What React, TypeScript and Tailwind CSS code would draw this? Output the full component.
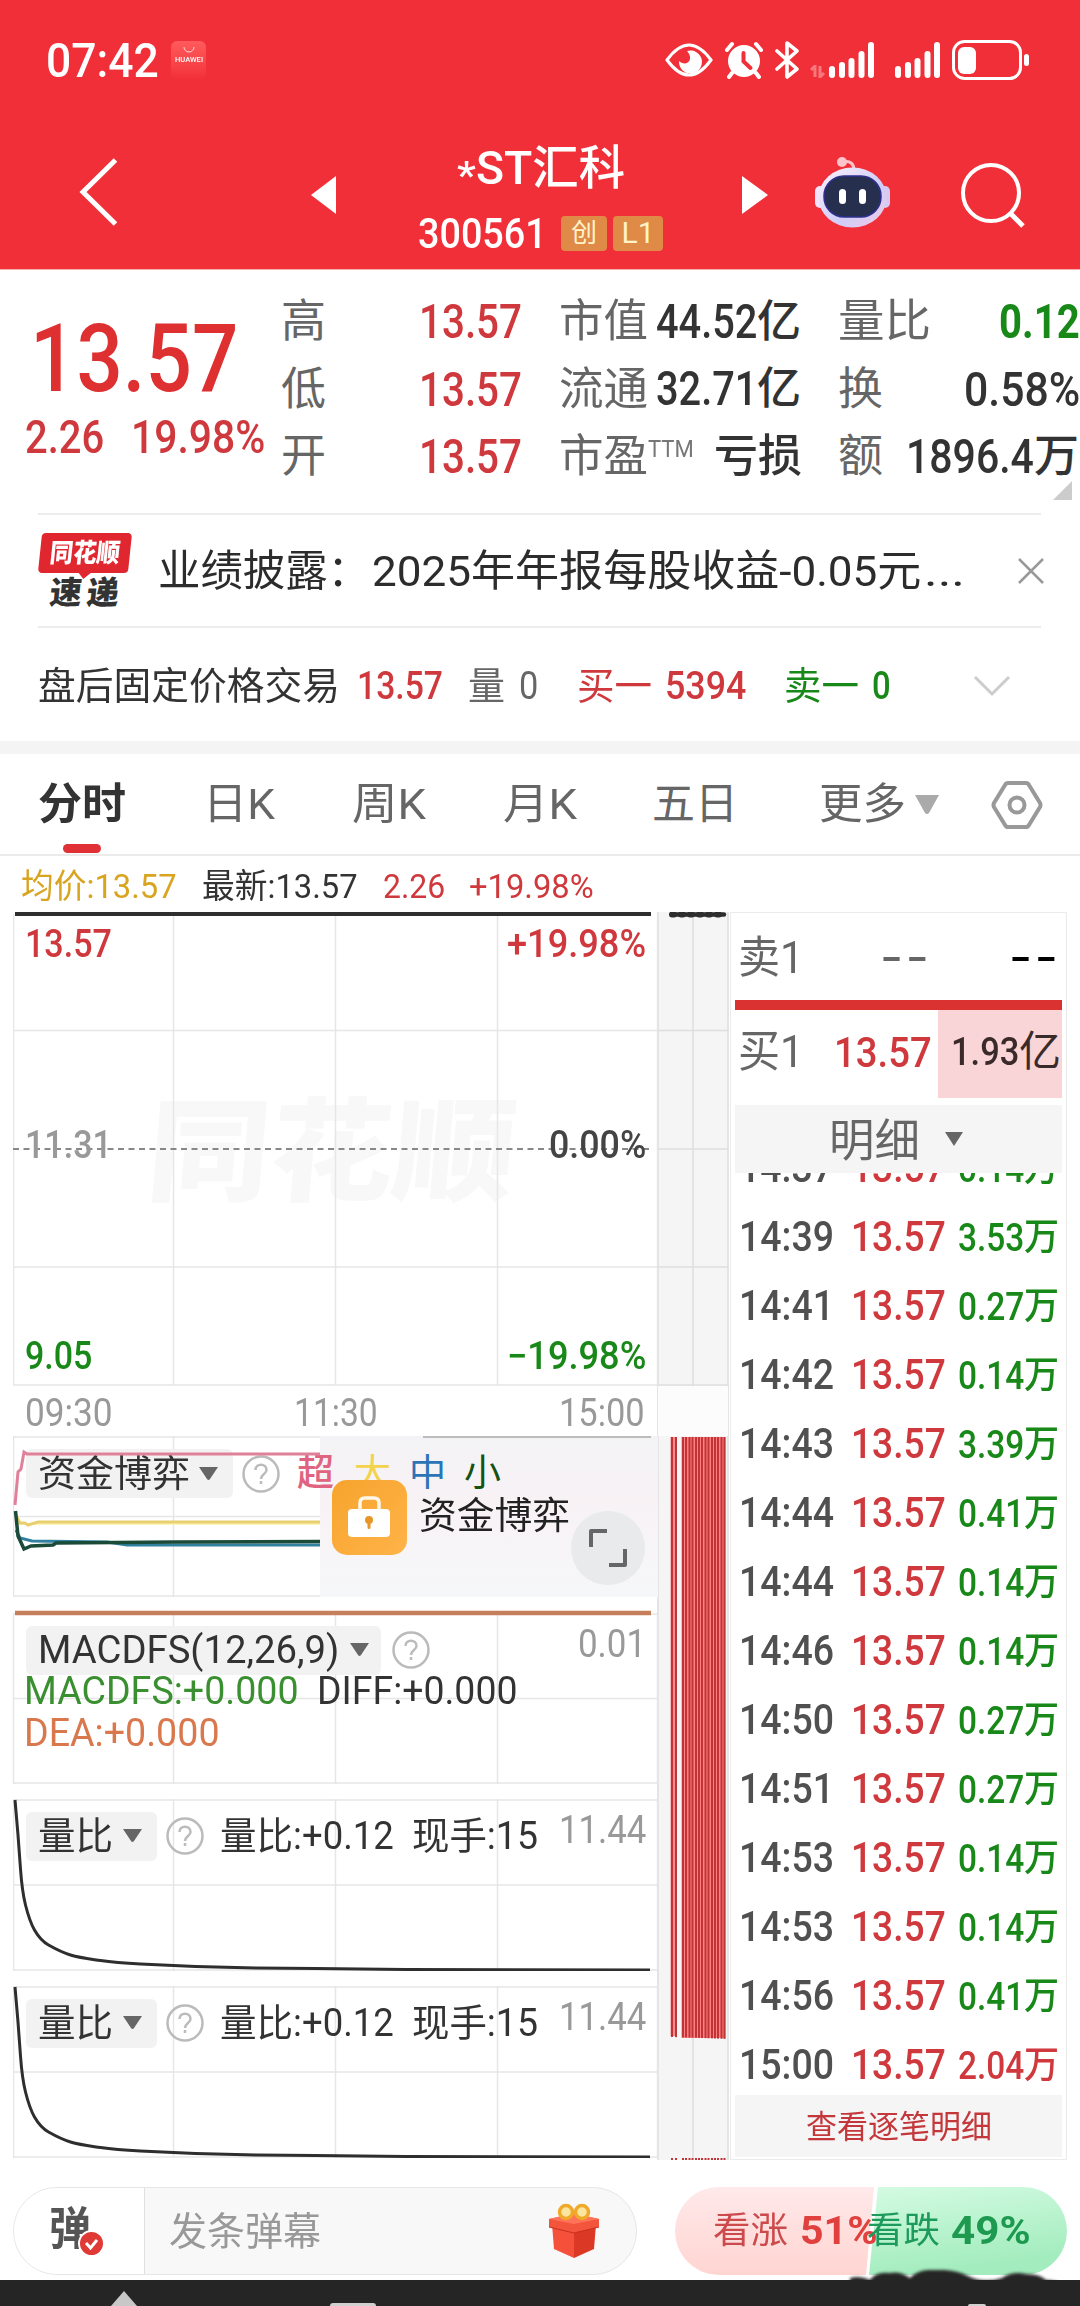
import React, { useLayoutEffect, useRef } from "react";

// Condensed text: squeezes its content into the width given by className
const Fit = ({
  className = "",
  children,
}: {
  className?: string;
  children: React.ReactNode;
}) => {
  const outer = useRef<HTMLSpanElement>(null);
  const inner = useRef<HTMLSpanElement>(null);
  useLayoutEffect(() => {
    if (!outer.current || !inner.current) return;
    const ratio = outer.current.clientWidth / inner.current.offsetWidth;
    inner.current.style.transform = `scaleX(${ratio})`;
  }, []);
  return (
    <span ref={outer} className={`block shrink-0 leading-none ${className}`}>
      <span ref={inner} className="inline-block origin-left whitespace-nowrap align-top">
        {children}
      </span>
    </span>
  );
};

const Signal = () => (
  <svg width="46" height="36" viewBox="0 0 46 36" fill="#fff">
    <rect x="0" y="24" width="6" height="12" rx="3" />
    <rect x="10" y="20" width="6" height="16" rx="3" />
    <rect x="19.5" y="16" width="6" height="20" rx="3" />
    <rect x="29.5" y="9" width="6" height="27" rx="3" />
    <rect x="39" y="0" width="6" height="36" rx="3" />
  </svg>
);

const StatusBar = () => (
  <div className="flex h-[120px] items-center pl-[46px] text-white">
    <Fit className="mt-0.5 w-[113px] text-[48px] font-medium">07:42</Fit>
    <div className="ml-3 flex h-[38px] w-[35px] flex-col items-center rounded-md bg-gradient-to-b from-[#ff5a5c] to-[#f23038]">
      <svg width="12" height="8" viewBox="0 0 12 8" className="mt-[5px]" fill="none" stroke="#ffd9d9" strokeWidth="1">
        <path d="M1 1a5 5 0 0 0 10 0" />
      </svg>
      <Fit className="mt-[3px] w-[28px] text-[7px] font-medium">HUAWEI</Fit>
    </div>
    <svg className="ml-[459px]" width="48" height="36" viewBox="0 0 48 36">
      <path d="M2 18C10 7 17 3 24 3s14 4 22 15C38 29 31 33 24 33S10 29 2 18Z" fill="none" stroke="#fff" strokeWidth="3" />
      <path d="M22 9a11.500 11.500 0 1 1-8 10c4 4 10 3 11-2 .5-3-1-6-3-8Z" fill="#fff" />
    </svg>
    <svg className="ml-3" width="38" height="38" viewBox="0 0 38 38">
      <circle cx="19" cy="20" r="16" fill="#fff" />
      <path d="M18.500 12v8.500l7 6.500" fill="none" stroke="#f12f38" strokeWidth="4" strokeLinecap="round" />
      <path d="M2 9l5-6M36 9l-5-6M7 32l-3 4M31 32l3 4" stroke="#fff" strokeWidth="4" strokeLinecap="round" />
    </svg>
    <svg className="ml-[11px]" width="26" height="38" viewBox="0 0 26 38" fill="none" stroke="#fff" strokeWidth="3.600" strokeLinejoin="round" strokeLinecap="round">
      <path d="M3 10l20 18-10 8V2l10 8L3 28" />
    </svg>
    <svg className="ml-2.5 mt-[22px]" width="15" height="13" viewBox="0 0 15 13" fill="none" stroke="#f8797c" strokeWidth="3">
      <path d="M1 5l4-4v11M14 8l-4 4V1" />
    </svg>
    <div className="ml-1">
      <Signal />
    </div>
    <div className="ml-[20px]">
      <Signal />
    </div>
    <svg className="ml-[11px]" width="78" height="40" viewBox="0 0 78 40">
      <rect x="1.500" y="1.500" width="67" height="37" rx="11" fill="none" stroke="#fff" strokeWidth="3" />
      <rect x="6" y="7" width="18" height="27" rx="6" fill="#fff" />
      <rect x="72" y="14" width="5" height="12" rx="2.500" fill="#fff" />
    </svg>
  </div>
);

const Robot = () => (
  <svg width="76" height="72" viewBox="0 0 76 72">
    <defs>
      <linearGradient id="head" x1="0" y1="0" x2="1" y2="1">
        <stop offset="0" stopColor="#fdf3fb" />
        <stop offset="0.6" stopColor="#cfcdf8" />
        <stop offset="1" stopColor="#f3c9e4" />
      </linearGradient>
    </defs>
    <circle cx="27" cy="6" r="5" fill="#ffc4cb" />
    <path d="M28 6c7-2 11 2 11 8" fill="none" stroke="#ffc4cb" strokeWidth="3" />
    <rect x="0" y="30" width="10" height="22" rx="5" fill="#f4e4fa" />
    <rect x="65" y="30" width="10" height="22" rx="5" fill="#d8c8f4" />
    <ellipse cx="37.500" cy="41.500" rx="34" ry="30" fill="url(#head)" />
    <rect x="9" y="20" width="57" height="41" rx="20" fill="#26304e" stroke="#2f2f90" strokeWidth="1.500" />
    <rect x="24" y="33" width="7" height="15" rx="3.500" fill="#fff" />
    <rect x="44" y="33" width="7" height="15" rx="3.500" fill="#fff" />
  </svg>
);

const TitleBar = () => (
  <div className="flex h-[149px] text-white">
    <svg className="ml-[79px] mt-[38px]" width="40" height="68" viewBox="0 0 40 68" fill="none" stroke="#fff" strokeWidth="5">
      <path d="M36.500 2L4 34l32.500 32" />
    </svg>
    <svg className="ml-[192px] mt-[56px]" width="26" height="38" viewBox="0 0 26 38" fill="#fff">
      <path d="M0 19L25 0v38z" />
    </svg>
    <div className="ml-[81px] mt-[24px] flex w-[246px] flex-col">
      <div className="flex h-[48px] pl-[39px] font-medium">
        <Fit className="mt-[13px] w-[19px] text-[38px]">*</Fit>
        <Fit className="w-[149px] text-[47px]">ST汇科</Fit>
      </div>
      <div className="mt-[23px] flex h-[36px] items-center">
        <Fit className="w-[129px] text-[43px] font-medium">300561</Fit>
        <span className="ml-[14px] flex h-[35px] w-[46px] items-center justify-center rounded bg-[#e08a48]">
          <span className="text-[26px] leading-none text-[#fff3c8]">创</span>
        </span>
        <span className="ml-1.5 flex h-[35px] w-[50px] items-center justify-center rounded bg-[#e08a48]">
          <span className="text-[30px] leading-none text-[#fff3c8]">L1</span>
        </span>
      </div>
    </div>
    <svg className="ml-[78px] mt-[56px]" width="26" height="38" viewBox="0 0 26 38" fill="#fff">
      <path d="M26 19L0 0v38z" />
    </svg>
    <div className="ml-[47px] mt-[36px]">
      <Robot />
    </div>
    <svg className="ml-[70px] mt-[42px]" width="64" height="66" viewBox="0 0 64 66" fill="none" stroke="#fff" strokeWidth="4">
      <circle cx="30" cy="31" r="28" />
      <path d="M49 51l13 13" strokeWidth="5" />
    </svg>
  </div>
);

const Quote = () => (
  <div className="flex h-[243px] text-[#333]">
    <div className="w-[281px] pt-[41px] text-[#df3031]">
      <Fit className="ml-[30px] w-[208px] text-[95px] font-medium">13.57</Fit>
      <div className="mt-[8px] flex pl-[25px] text-[46px] font-medium text-[#cf383c]">
        <Fit className="w-[79px]">2.26</Fit>
        <Fit className="ml-[27px] w-[134px]">19.98%</Fit>
      </div>
    </div>
    <div className="flex w-[241px] flex-col pt-[18px]">
      {["高", "低", "开"].map((label) => (
        <div key={label} className="flex h-[67.500px] items-center justify-between">
          <span className="text-[45px] leading-none text-[#666]">{label}</span>
          <Fit className="w-[103px] text-[49px] font-medium text-[#cf383c]">13.57</Fit>
        </div>
      ))}
    </div>
    <div className="ml-[37px] flex w-[243px] flex-col pt-[18px]">
      <div className="flex h-[67.500px] items-center">
        <Fit className="w-[89px] text-[45px] text-[#666]">市值</Fit>
        <Fit className="ml-[8px] w-[101px] text-[48px] font-medium">44.52</Fit>
        <span className="text-[44px] leading-none font-medium">亿</span>
      </div>
      <div className="flex h-[67.500px] items-center">
        <Fit className="w-[89px] text-[45px] text-[#666]">流通</Fit>
        <Fit className="ml-[8px] w-[101px] text-[48px] font-medium">32.71</Fit>
        <span className="text-[44px] leading-none font-medium">亿</span>
      </div>
      <div className="flex h-[67.500px] items-center">
        <Fit className="w-[89px] text-[45px] text-[#666]">市盈</Fit>
        <Fit className="mb-4 w-[46px] text-[24px] text-[#777]">TTM</Fit>
        <Fit className="ml-[20px] w-[88px] text-[45px] font-medium">亏损</Fit>
      </div>
    </div>
    <div className="ml-[36px] flex w-[242px] flex-col pt-[18px]">
      <div className="flex h-[67.500px] items-center justify-between">
        <Fit className="w-[93px] text-[45px] text-[#666]">量比</Fit>
        <Fit className="w-[81px] text-[49px] font-bold text-[#188818]">0.12</Fit>
      </div>
      <div className="flex h-[67.500px] items-center justify-between">
        <span className="text-[45px] leading-none text-[#666]">换</span>
        <Fit className="w-[116px] text-[49px] font-medium">0.58%</Fit>
      </div>
      <div className="flex h-[67.500px] items-center">
        <span className="text-[45px] leading-none text-[#666]">额</span>
        <Fit className="ml-[23px] w-[128px] text-[49px] font-medium">1896.4</Fit>
        <span className="text-[45px] leading-none font-medium">万</span>
      </div>
      <svg className="-mt-2.5 mr-[7px] self-end" width="20" height="20" viewBox="0 0 20 20" fill="#ccc">
        <path d="M0 19L19 0v19z" />
      </svg>
    </div>
  </div>
);

const News = () => (
  <div className="mx-[38px] flex h-[115px] w-[1003px] items-center border-y-2 border-[#ececec]">
    <div className="flex w-[94px] shrink-0 flex-col items-center">
      <div className="relative flex h-[40px] w-[90px] -skew-x-6 items-center justify-center rounded bg-[#e0262f]">
        <Fit className="w-[70px] text-[26px] font-black text-white">同花顺</Fit>
        <svg className="absolute -bottom-[6px] left-[40px]" width="14" height="7" viewBox="0 0 14 7" fill="#e0262f">
          <path d="M0 0h14L6 7z" />
        </svg>
      </div>
      <div className="mt-1 flex -skew-x-6 gap-[5px] text-[32px] leading-none font-black text-[#333]">
        <span>速</span>
        <span>递</span>
      </div>
    </div>
    <Fit className="mt-0.5 ml-[26px] w-[212px] text-[43px] text-[#2c2c2c]">业绩披露：</Fit>
    <Fit className="mt-0.5 ml-[2px] w-[549px] text-[43px] text-[#2c2c2c]">2025年年报每股收益-0.05元</Fit>
    <Fit className="mt-0.5 ml-[3px] w-[41px] text-[43px] text-[#2c2c2c]">...</Fit>
    <svg className="ml-[53px] shrink-0" width="26" height="26" viewBox="0 0 26 26" stroke="#999" strokeWidth="2.500">
      <path d="M1 1l24 24M25 1L1 25" />
    </svg>
  </div>
);

const AfterHours = () => (
  <div className="flex h-[113px] items-center pt-0.5 pl-[38px] text-[38px] text-[#333]">
    <Fit className="w-[302px]">盘后固定价格交易</Fit>
    <Fit className="ml-[17px] w-[86px] font-medium text-[#cf383c]">13.57</Fit>
    <Fit className="ml-[25px] w-[37px] text-[#666]">量</Fit>
    <Fit className="ml-[14px] w-[19px] text-[#666]">0</Fit>
    <Fit className="ml-[39px] w-[75px] text-[#cf383c]">买一</Fit>
    <Fit className="ml-[13px] w-[81px] font-medium text-[#cf383c]">5394</Fit>
    <Fit className="ml-[38px] w-[75px] text-[#188818]">卖一</Fit>
    <Fit className="ml-[13px] w-[19px] font-medium text-[#188818]">0</Fit>
    <svg className="ml-[82px]" width="38" height="22" viewBox="0 0 38 22" fill="none" stroke="#ccc" strokeWidth="3">
      <path d="M2 2l17 17L36 2" />
    </svg>
  </div>
);

const Tabs = () => (
  <div className="border-b-2 border-[#ebebeb]">
    <div className="flex h-[100px] items-center pt-px text-[43px] text-[#666]">
      <div className="relative ml-[38px]">
        <Fit className="w-[88px] font-bold text-[#333]">分时</Fit>
        <span className="absolute top-[61px] left-[25px] h-[9px] w-[38px] rounded-full bg-[#e03236]" />
      </div>
      <Fit className="ml-[77px] w-[72px]">日K</Fit>
      <Fit className="ml-[77px] w-[74px]">周K</Fit>
      <Fit className="ml-[77px] w-[74px]">月K</Fit>
      <Fit className="ml-[75px] w-[86px]">五日</Fit>
      <Fit className="ml-[81px] w-[87px]">更多</Fit>
      <svg className="ml-[9px]" width="24" height="20" viewBox="0 0 24 20" fill="#aaa">
        <path d="M0 0h24L14 18q-2 2-4 0z" />
      </svg>
      <svg className="ml-[52px]" width="52" height="50" viewBox="0 0 52 50" fill="none" stroke="#999" strokeWidth="4">
        <path d="M17 3h18q2 0 3 2l11 18q1 2 0 4L38 45q-1 2-3 2H17q-2 0-3-2L3 27q-1-2 0-4L14 5q1-2 3-2Z" />
        <circle cx="26" cy="25" r="7.500" />
      </svg>
    </div>
  </div>
);

const grid = "#e6e6e6";

const MainChart = () => (
  <div className="relative h-[474px] w-[645px]">
    <svg className="absolute inset-0" width="645" height="474" viewBox="0 0 645 474">
      <text x="136" y="280" transform="skewX(-5) translate(20 0)" fontSize="112" fontWeight="900" fill="#f8f8f8" textLength="368" lengthAdjust="spacingAndGlyphs">
        同花顺
      </text>
      <path d="M.5 2v471M160.500 2v471M322.500 2v471M484.500 2v471M644.500 2v471M0 118.500h645M0 355h645M0 473h645" stroke={grid} strokeWidth="1.500" fill="none" />
      <path d="M0 237h640" stroke="#888" strokeWidth="2" strokeDasharray="6 4.500" />
      <path d="M2 2h636" stroke="#2e2e2e" strokeWidth="4" />
    </svg>
    <div className="absolute inset-0 flex flex-col pl-[12px] text-[38px] font-medium">
      <div className="mt-[13px] flex justify-between pr-[12px] text-[#cf383c]">
        <Fit className="w-[87px]">13.57</Fit>
        <Fit className="w-[139px]">+19.98%</Fit>
      </div>
      <div className="mt-[163px] flex justify-between pr-[12px] text-[#999]">
        <Fit className="w-[87px]">11.31</Fit>
        <Fit className="w-[97px] text-[#444]">0.00%</Fit>
      </div>
      <div className="mt-[173px] flex justify-between pr-[12px] text-[#188818]">
        <Fit className="w-[67px]">9.05</Fit>
        <Fit className="w-[139px]">−19.98%</Fit>
      </div>
    </div>
  </div>
);

const Help = () => (
  <svg width="38" height="38" viewBox="0 0 38 38" fill="none" stroke="#bbb" strokeWidth="2.500">
    <circle cx="19" cy="19" r="17.500" />
    <path d="M13.500 15c0-7 11-7 11 0 0 4-5.500 4-5.500 9M19 26v3" stroke="#bbb" />
  </svg>
);

const Caret = () => (
  <svg width="19" height="14" viewBox="0 0 19 14" fill="#666">
    <path d="M0 0h19L11 12q-1.500 2-3 0z" />
  </svg>
);

const Grid = ({ h }: { h: number }) => (
  <path
    d={`M.5 0V${h}M160.500 0V${h}M322.500 0V${h}M484.500 0V${h}M644.500 0V${h}M0 1h645M0 ${h / 2}h645M0 ${h - 1}h645`}
    stroke={grid}
    strokeWidth="1.500"
    fill="none"
  />
);

const FundPanel = () => (
  <div className="relative h-[161px] w-[645px]">
    <svg className="absolute inset-0" width="645" height="161" viewBox="0 0 645 161" fill="none">
      <Grid h={161} />
      <path d="M3 88h304" stroke="#fdf5b8" strokeWidth="2" />
      <path d="M3 79l4 8 5 0 3 2 10-3h283" stroke="#e8d070" strokeWidth="3" />
      <path d="M3 94l4 8 12 3 75 1 20 3h193" stroke="#3080a0" strokeWidth="3" />
      <path d="M2.500 75L5 100l6 13 7-3 22-1 3-2 120-1 144-.5" stroke="#1a4a38" strokeWidth="3.500" />
    </svg>
    <div className="absolute top-0 right-0 h-[161px] w-[338px] bg-gradient-to-b from-[#f3f3f5] via-[#f8f2f5] via-40% to-[#f6f7f9]" />
    <div className="relative flex items-center pt-[13px] pl-[13px] text-[37px] leading-none">
      <div className="flex h-[49px] w-[207px] items-center rounded-md bg-[#f2f2f2] pl-[12px] text-[#333]">
        <Fit className="mt-0.5 w-[152px]">资金博弈</Fit>
        <div className="ml-[9px]">
          <Caret />
        </div>
      </div>
      <div className="ml-[9px]">
        <Help />
      </div>
      <span className="ml-[17px] font-medium text-[#de6480]">超</span>
      <span className="ml-[20px] text-[#f3d24c]">大</span>
      <span className="ml-[18px] text-[#2b74b5]">中</span>
      <span className="ml-[18px] text-[#145214]">小</span>
    </div>
    <svg className="absolute inset-0" width="645" height="161" viewBox="0 0 645 161" fill="none">
      <path d="M410 1h228" stroke="#aaa" strokeWidth="1.500" />
      <path d="M2 69L5 36l3-3 3-17 3 2h293" stroke="#e0809a" strokeWidth="3" />
    </svg>
    <div className="absolute top-[44px] left-[319px] flex items-center">
      <svg width="75" height="75" viewBox="0 0 75 75">
        <defs>
          <linearGradient id="lock" x1="0" y1="0" x2="1" y2="1">
            <stop offset="0" stopColor="#f6a42e" />
            <stop offset="1" stopColor="#ffb347" />
          </linearGradient>
        </defs>
        <rect width="75" height="75" rx="15" fill="url(#lock)" />
        <path d="M28 31v-8q0-5 5-5h9q5 0 5 5v8" fill="none" stroke="#fff8e8" strokeWidth="3.500" />
        <rect x="16" y="29" width="42" height="28" rx="4" fill="#fff" />
        <circle cx="37" cy="40" r="4" fill="#e8962a" />
        <rect x="35.500" y="41" width="3" height="8" rx="1.500" fill="#e8962a" />
      </svg>
      <Fit className="mb-0.5 ml-[12px] w-[151px] text-[37px] text-[#222]">资金博弈</Fit>
    </div>
    <div className="absolute top-[75px] left-[558px] flex size-[74px] items-center justify-center rounded-full bg-[#e9eaec]">
      <svg width="40" height="40" viewBox="0 0 40 40" fill="none" stroke="#666" strokeWidth="4" strokeLinejoin="round">
        <path d="M19 3H3v16M21 37h16V21" />
      </svg>
    </div>
  </div>
);

const MacdPanel = () => (
  <div className="relative mt-[16px] h-[171px] w-[645px]">
    <svg className="absolute inset-0 overflow-visible" width="645" height="171" viewBox="0 0 645 171" fill="none">
      <Grid h={171} />
      <path d="M2 0h636" stroke="#c67f5c" strokeWidth="4.500" />
    </svg>
    <div className="relative flex items-center pt-[12px] pl-[13px] text-[38px]">
      <div className="flex h-[49px] w-[355px] items-center rounded-md bg-[#f2f2f2] pl-[12px] text-[#333]">
        <Fit className="w-[301px]">MACDFS(12,26,9)</Fit>
        <div className="ml-[11px]">
          <Caret />
        </div>
      </div>
      <div className="ml-[11px]">
        <Help />
      </div>
      <Fit className="mb-3 ml-[148px] w-[68px] text-[#999]">0.01</Fit>
    </div>
    <div className="relative mt-[-3px] flex pl-[11px] text-[38px] text-[#333]">
      <Fit className="w-[275px] text-[#3a8f30]">MACDFS:+0.000</Fit>
      <Fit className="ml-[18px] w-[201px]">DIFF:+0.000</Fit>
    </div>
    <Fit className="relative mt-[4px] ml-[11px] w-[196px] text-[38px] text-[#d9774d]">DEA:+0.000</Fit>
  </div>
);

const VolumePanel = () => (
  <div className="relative mt-[15px] h-[172px] w-[645px]">
    <svg className="absolute inset-0" width="645" height="172" viewBox="0 0 645 172" fill="none">
      <Grid h={172} />
      <path
        d="M2 1L5 36l2.500 34c1 14 2 24 5 36s5 18 9 25 7 11 14 15 12 7 22 10 20 4 30 5.500 30 3 40 3.500l55 2.500 60 1.500 60 .5 90 1 244.500.5"
        stroke="#2e2e2e"
        strokeWidth="3"
      />
    </svg>
    <div className="relative flex items-center pt-[12px] pl-[13px] text-[38px] text-[#333]">
      <div className="flex h-[49px] w-[131px] items-center rounded-md bg-[#f2f2f2] pl-[12px]">
        <Fit className="w-[75px]">量比</Fit>
        <div className="ml-[10px]">
          <Caret />
        </div>
      </div>
      <div className="ml-[9px]">
        <Help />
      </div>
      <Fit className="ml-[16px] w-[174px]">量比:+0.12</Fit>
      <Fit className="ml-[18px] w-[126px]">现手:15</Fit>
      <Fit className="mb-3 ml-[21px] w-[87px] text-[#999]">11.44</Fit>
    </div>
  </div>
);

const bars = [14, 18, 25, 28, 31.5, 34.5, 38, 41, 44, 47.5, 50.5, 54, 57, 60, 63.5, 66.5];

// Auction strip between the chart and the order book
const Strip = () => (
  <svg className="shrink-0" width="72" height="1248" viewBox="0 0 72 1248">
    <rect width="72" height="1248" fill="#f5f5f5" />
    <path d="M1 0v1248M71 0v1248M36 0v1248M0 118.500h72M0 237h72M0 355h72M0 473h72" stroke="#dedede" strokeWidth="1.500" />
    <path d="M1 474h70v50H1z" fill="#fcfcfc" />
    <path d="M15 2.500h52" stroke="#2e2e2e" strokeWidth="4.500" strokeLinecap="round" />
    <path d="M15 2.500h52" stroke="#2e2e2e" strokeWidth="6" strokeLinecap="round" strokeDasharray="2 7" />
    <rect x="13.500" y="525" width="6" height="599" fill="#f08a8c" />
    <rect x="24.500" y="525" width="44" height="601" fill="#ff8080" />
    {bars.map((x, i) => (
      <g key={x}>
        <rect x={x} y="525" width="2" height={600 + i / 8} fill="#c03438" />
        <rect x={x} y="1246" width="2" height="2" fill="#c03438" />
      </g>
    ))}
  </svg>
);

const trades = [
  ["14:37", "0.14"],
  ["14:39", "3.53"],
  ["14:41", "0.27"],
  ["14:42", "0.14"],
  ["14:43", "3.39"],
  ["14:44", "0.41"],
  ["14:44", "0.14"],
  ["14:46", "0.14"],
  ["14:50", "0.27"],
  ["14:51", "0.27"],
  ["14:53", "0.14"],
  ["14:53", "0.14"],
  ["14:56", "0.41"],
  ["15:00", "2.04"],
];

const OrderBook = () => (
  <div className="ml-px flex h-[1248px] w-[337px] flex-col border border-[#ebebeb] pr-[4px] pl-[4px]">
    <div className="flex h-[87px] items-center pt-0.5 pl-[3px]">
      <Fit className="w-[66px] text-[44px] text-[#666]">卖1</Fit>
      <Fit className="ml-[77px] w-[51px] text-[43px] font-medium tracking-[3px] text-[#666]">--</Fit>
      <Fit className="ml-[78px] w-[51px] text-[43px] font-medium tracking-[3px]">--</Fit>
    </div>
    <div className="h-[10px] shrink-0 bg-[#d93231]" />
    <div className="flex h-[88px] shrink-0">
      <div className="flex w-[203px] items-center pb-1 pl-[3px]">
        <Fit className="w-[66px] text-[44px] text-[#666]">买1</Fit>
        <Fit className="ml-[30px] w-[98px] text-[43px] font-medium text-[#cf383c]">13.57</Fit>
      </div>
      <div className="flex flex-1 items-center bg-[#fad5d8] pb-1 pl-[13px] text-[#3a2a2a]">
        <Fit className="w-[68px] text-[39px] font-medium">1.93</Fit>
        <span className="text-[42px] leading-none">亿</span>
      </div>
    </div>
    <div className="mt-[7px] flex h-[68px] shrink-0 items-center bg-[#f5f5f5] pl-[94px]">
      <Fit className="mt-1 w-[91px] text-[45px] text-[#666]">明细</Fit>
      <svg className="ml-[25px]" width="18" height="14" viewBox="0 0 18 14" fill="#666">
        <path d="M0 0h18L9 14z" />
      </svg>
    </div>
    {/* list is scrolled so the first row is cut by the header */}
    <div className="flex h-[922px] shrink-0 flex-col justify-end overflow-hidden">
      <div className="-mb-[4px]">
        {trades.map(([time, vol], i) => (
          <div key={i} className="flex h-[69px] items-center pl-[4px]">
            <Fit className="w-[95px] text-[43px] font-medium text-[#505050]">{time}</Fit>
            <Fit className="ml-[17px] w-[95px] text-[43px] font-medium text-[#cf383c]">13.57</Fit>
            <div className={`mt-0.5 ml-[12px] flex items-center font-medium ${i === 13 ? "text-[#cf383c]" : "text-[#188818]"}`}>
              <Fit className="w-[66px] text-[38px]">{vol}</Fit>
              <Fit className="w-[35px] text-[37px]">万</Fit>
            </div>
          </div>
        ))}
      </div>
    </div>
    <div className="flex h-[62px] shrink-0 items-center justify-center bg-[#f5f5f5]">
      <Fit className="mt-0.5 w-[186px] text-[32px] text-[#c4383c]">查看逐笔明细</Fit>
    </div>
  </div>
);

const Gift = () => (
  <svg width="52" height="56" viewBox="0 0 52 56">
    <path d="M4 21l22 5v29L6 46z" fill="#f4503a" />
    <path d="M48 21l-22 5v29l20-9z" fill="#dc3826" />
    <path d="M1 16l25-5 25 5v8l-25 6L1 24z" fill="#f2543c" />
    <path d="M1 16l25 5 25-5-25-6z" fill="#ff7358" />
    <path d="M1 24l25 6 25-6" fill="none" stroke="#c8301f" strokeWidth="1" />
    <circle cx="18" cy="9" r="6.500" fill="#fbe6a0" stroke="#f0a92a" strokeWidth="3.500" />
    <circle cx="34" cy="9" r="6.500" fill="#fbe6a0" stroke="#f0a92a" strokeWidth="3.500" />
  </svg>
);

const BottomBar = () => (
  <div className="flex h-[120px] items-start pt-[27px] pl-[13px]">
    <div className="flex h-[88px] w-[624px] items-center overflow-hidden rounded-full border border-[#e6e6e6] bg-[#f8f8f8]">
      <div className="relative flex h-full w-[131px] items-center border-r border-[#e0e0e0] bg-white pl-[35px]">
        <Fit className="mb-1 w-[42px] text-[45px] font-bold text-[#555]">弹</Fit>
        <svg className="absolute top-[42px] left-[64px]" width="27" height="27" viewBox="0 0 27 27">
          <circle cx="13.500" cy="13.500" r="12.500" fill="#e03a36" stroke="#fff" strokeWidth="2" />
          <path d="M8 13l4.500 5L19 10" fill="none" stroke="#fff" strokeWidth="3" />
        </svg>
      </div>
      <Fit className="mt-0.5 ml-[24px] w-[152px] text-[39px] text-[#999]">发条弹幕</Fit>
      <div className="ml-[227px]">
        <Gift />
      </div>
    </div>
    <div className="relative ml-[38px] h-[88px] w-[392px] overflow-hidden rounded-full text-[36px]">
      <svg className="absolute inset-0" width="392" height="88" viewBox="0 0 392 88">
        <defs>
          <linearGradient id="up" x1="0" y1="0" x2="0" y2="1">
            <stop offset="0" stopColor="#ffe9ea" />
            <stop offset="1" stopColor="#ffd5d1" />
          </linearGradient>
          <linearGradient id="down" x1="0" y1="0" x2="0.300" y2="1">
            <stop offset="0" stopColor="#d4fbe2" />
            <stop offset="1" stopColor="#a2ecbd" />
          </linearGradient>
        </defs>
        <path d="M0 0h199l-8 88H0z" fill="url(#up)" />
        <path d="M203 0h189v88H194z" fill="url(#down)" />
      </svg>
      <div className="relative flex h-full items-center pl-[38px]">
        <Fit className="w-[75px] text-[#cc4a4c]">看涨</Fit>
        <Fit className="ml-[12px] w-[78px] text-[39px] font-bold text-[#e0403e]">51%</Fit>
        <Fit className="-ml-[11px] w-[73px] text-[#1d9a5c]">看跌</Fit>
        <Fit className="ml-[11px] w-[80px] text-[39px] font-bold text-[#1d9a50]">49%</Fit>
      </div>
    </div>
  </div>
);

const NavBar = () => (
  <div className="relative flex h-[26px] items-end bg-[#252525]">
    <svg className="absolute -top-[10px] left-[846px] blur-[1.5px]" width="228" height="24" viewBox="0 0 228 24" fill="#252525">
      <path d="M4 22V8q10-3 20 2 6-9 20-7 10-2 20 5 8-9 24-8 22-1 34 6 16 8 34 2 10-7 24-4 14 0 20 6 14 0 24 10v2z" />
    </svg>
    <svg className="ml-[111px]" width="26" height="15" viewBox="0 0 26 15" fill="#c8c8c8">
      <path d="M0 15L13 0l13 15z" />
    </svg>
    <div className="ml-[193px] h-[3px] w-[46px] rounded-t bg-[#d0d0d0]" />
    <div className="ml-[592px] h-[2px] w-[18px] rounded-t bg-[#d0d0d0]" />
  </div>
);

const App = () => {
  return (
    <div className="h-[2306px] w-[1080px] overflow-hidden bg-white font-['Roboto','Noto_Sans_CJK_SC',sans-serif]">
      <div className="h-[270px] border-b border-[#f9b0ac] bg-[#f12f38]">
        <StatusBar />
        <TitleBar />
      </div>
      <Quote />
      <News />
      <AfterHours />
      <div className="h-[13px] bg-[#f4f4f4]" />
      <Tabs />
      <div className="flex h-[56px] items-center pt-1 pl-[21px] text-[34px] text-[#333]">
        <Fit className="w-[156px] text-[#d9a520]">均价:13.57</Fit>
        <Fit className="ml-[25px] w-[156px]">最新:13.57</Fit>
        <Fit className="ml-[25px] w-[62px] text-[#cf383c]">2.26</Fit>
        <Fit className="ml-[24px] w-[125px] text-[#cf383c]">+19.98%</Fit>
      </div>
      <div className="flex h-[1248px]">
        <div className="ml-[13px] w-[644px] shrink-0">
          <MainChart />
          <div className="flex h-[50px] items-center pt-[3px] pl-[12px] text-[38px] text-[#999]">
            <Fit className="w-[88px]">09:30</Fit>
            <Fit className="ml-[181px] w-[84px]">11:30</Fit>
            <Fit className="ml-[181px] w-[86px]">15:00</Fit>
          </div>
          <FundPanel />
          <MacdPanel />
          <VolumePanel />
          <VolumePanel />
        </div>
        <Strip />
        <OrderBook />
      </div>
      <BottomBar />
      <NavBar />
    </div>
  );
};

export default App;
